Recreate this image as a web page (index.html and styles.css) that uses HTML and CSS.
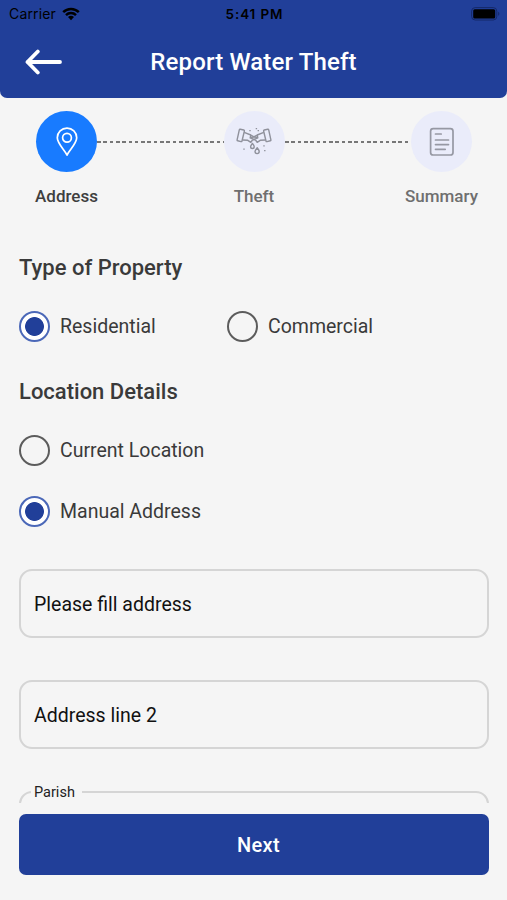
FILE: index.html
```
<!DOCTYPE html>
<html lang="en">
<head>
<meta charset="UTF-8">
<meta name="viewport" content="width=device-width, initial-scale=1">
<title>Report Water Theft</title>
<link rel="stylesheet" href="styles.css">
</head>

<body>
<header class="header">
	<div class="status-bar">
		<div class="carrier">
			<span>Carrier</span>
			<svg class="wifi" width="18" height="14" viewBox="0 0 18 14">
				<path d="M1.2 5.2a11.2 11.2 0 0 1 15.6 0M4 8.1a7.2 7.2 0 0 1 10 0" fill="none" stroke="#000" stroke-width="2.5"/>
				<path d="M9 13.2L6 10.1a4.3 4.3 0 0 1 6 0z"/>
			</svg>
		</div>
		<div class="time">5:41 PM</div>
		<svg class="battery" width="29" height="14" viewBox="0 0 29 14">
			<rect x=".6" y=".6" width="25.2" height="12.4" rx="3.6" fill="none" stroke="#142869"/>
			<rect x="2.2" y="2.2" width="22" height="9.2" rx="1.5"/>
			<path d="M27.2 4.8c1.600.7 1.600 3.300 0 4z" fill="#142869"/>
		</svg>
	</div>
	<div class="nav-bar">
		<svg class="back" width="38" height="26" viewBox="0 0 38 26">
			<path d="M35 13H2.500M12.800 2.500L2.500 13l10.300 10.500" fill="none" stroke="#fff" stroke-width="3.800" stroke-linecap="round" stroke-linejoin="round"/>
		</svg>
		<h1>Report Water Theft</h1>
	</div>
</header>

<main class="content">
	<ol class="steps">
		<li class="step active">
			<span class="step-icon">
				<svg width="22" height="30" viewBox="0 0 22 30" fill="none" stroke="#fff" stroke-width="1.700" stroke-linejoin="round">
					<path d="M11 28C8.500 23 1.300 16.500 1.300 10.800a9.700 9.700 0 0 1 19.400 0C20.700 16.500 13.500 23 11 28z"/>
					<circle cx="11" cy="10.700" r="4.400"/>
				</svg>
			</span>
			<span class="step-label">Address</span>
		</li>
		<li class="step-line"></li>
		<li class="step">
			<span class="step-icon">
				<svg width="36" height="30" viewBox="0 0 36 30" fill="none" stroke="#8f919b" stroke-width="1.400" stroke-linejoin="round">
					<path d="M4.200 2.200l3.600.8q.8.200.6 1L6 14q-.2.800-1 .6l-3.300-.8q-.8-.2-.6-1L3.300 2.900q.2-.8.900-.7z"/>
					<path d="M31.800 2.200l-3.600.8q-.8.200-.6 1L30 14q.2.800 1 .6l3.300-.8q.8-.2.600-1L32.700 2.900q-.2-.8-.9-.7z"/>
					<path d="M8.200 5.400l6.600 2.600 3.200 1.800 3.200-1.800 6.600-2.600"/>
					<path d="M6.600 13l5.200.3 3 2 1.300-1.800 1.900-1 1.900 1 1.300 1.800 3-2 5.200-.3"/>
					<path d="M14.800 8l-.6 2.800 3.800-1 3.800 1-.6-2.800M14.200 10.800l3.800 1.700 3.800-1.700"/>
					<path d="M16.400 16.400c1.100 1.500 1.800 2.300 1.800 3.300a1.800 1.800 0 0 1-3.600 0c0-1 .8-1.800 1.800-3.300z"/>
					<path d="M21.200 20.800c1.300 1.600 2 2.600 2 3.700a2.100 2.100 0 0 1-4.200 0c0-1.100.9-2.100 2.200-3.700z"/>
					<path d="M14 3v1.300M20.400 1v1.300M22.300 3v1.200M8 21.500v1.300M28 18.300v1.300M28.800 23v1.300"/>
				</svg>
			</span>
			<span class="step-label">Theft</span>
		</li>
		<li class="step-line"></li>
		<li class="step">
			<span class="step-icon">
				<svg width="26" height="30" viewBox="0 0 26 30" fill="none" stroke="#9698a3" stroke-width="1.700" stroke-linecap="round">
					<rect x="1.600" y="1.600" width="22.400" height="26.400" rx="2.600"/>
					<path d="M6.500 7h5.700M6.500 13h13M6.500 17.600h13M6.500 22.300h9.700"/>
				</svg>
			</span>
			<span class="step-label">Summary</span>
		</li>
	</ol>

	<section class="group">
		<h2>Type of Property</h2>
		<div class="options">
			<label class="option"><input type="radio" name="property" checked>Residential</label>
			<label class="option"><input type="radio" name="property">Commercial</label>
		</div>
	</section>

	<section class="group">
		<h2>Location Details</h2>
		<div class="options stacked">
			<label class="option"><input type="radio" name="location">Current Location</label>
			<label class="option"><input type="radio" name="location" checked>Manual Address</label>
		</div>
	</section>

	<div class="fields">
		<input class="field" type="text" placeholder="Please fill address">
		<input class="field" type="text" placeholder="Address line 2">
		<fieldset class="field-outline">
			<legend>Parish</legend>
		</fieldset>
	</div>
</main>

<footer class="footer">
	<button class="next" type="button">Next</button>
</footer>
</body>
</html>
```
FILE: styles.css
```
* {
	box-sizing: border-box;
}

body {
	margin: 0;
	height: 900px;
	display: flex;
	flex-direction: column;
	overflow: hidden;
	background: #f5f5f5;
	color: #3a3a3a;
	font-family: Roboto, sans-serif;
}

h1, h2 {
	margin: 0;
	font-weight: 500;
}

.header {
	flex: none;
	height: 98px;
	background: #213f99;
	border-radius: 0 0 7px 7px;
}

.status-bar {
	display: grid;
	grid-template-columns: 1fr auto 1fr;
	align-items: center;
	height: 27px;
	padding: 0 7px 0 9px;
	color: #000;
	font: 14px Inter, sans-serif;
}

.carrier {
	display: flex;
	align-items: center;
	gap: 6px;
	letter-spacing: .15px;
}

.time {
	font-weight: 600;
	font-size: 13.500px;
	letter-spacing: .9px;
}

.battery {
	justify-self: end;
}

.nav-bar {
	display: grid;
	grid-template-columns: 38px 1fr 38px;
	align-items: center;
	height: 70px;
	padding: 0 25px;
}

h1 {
	color: #fff;
	font-size: 24px;
	letter-spacing: .15px;
	text-align: center;
}

.content {
	flex: none;
	height: 705px;
	overflow: hidden;
	padding: 13px 18px 0 19px;
}

/* Progress steps */

.steps {
	display: flex;
	margin: 0;
	padding: 0 17px;
	list-style: none;
}

.step {
	display: flex;
	flex-direction: column;
	align-items: center;
	width: 61px;
	color: #6f6f6f;
}

.step-icon {
	display: flex;
	align-items: center;
	justify-content: center;
	width: 61px;
	height: 61px;
	border-radius: 50%;
	background: #eaecfa;
}

.step-label {
	margin-top: 14px;
	font-size: 17px;
	font-weight: 500;
	line-height: 20px;
}

.active {
	color: #3f3f3f;
}

.active .step-icon {
	background: #187bff;
}

.step-line {
	flex: 1;
	height: 2px;
	margin-top: 30px;
	background: repeating-linear-gradient(to right, #777 0 3.600px, transparent 3.600px 6.300px);
}

/* Radio groups */

.group {
	margin-top: 48px;
}

.group + .group {
	margin-top: 36px;
}

h2 {
	font-size: 22px;
	line-height: 28px;
}

.options {
	display: grid;
	grid-template-columns: 208px 1fr;
	margin-top: 29px;
}

.stacked {
	grid-template-columns: 1fr;
	row-gap: 30px;
}

.option {
	display: flex;
	align-items: center;
	gap: 10px;
	font-size: 19.500px;
	line-height: 31px;
}

.option input {
	appearance: none;
	width: 31px;
	height: 31px;
	margin: 0;
	border: 2px solid #5c5c5c;
	border-radius: 50%;
}

.option input:checked {
	border-color: #4b68b8;
	background: radial-gradient(circle, #213f99 9px, #fff 9.800px);
}

/* Text fields */

.fields {
	display: flex;
	flex-direction: column;
	gap: 43px;
	margin-top: 42px;
}

.field {
	height: 69px;
	margin-bottom: -1px;
	padding: 1px 13px 0;
	border: 2px solid #d5d5d5;
	border-radius: 13px;
	background: none;
	font: 19.500px Roboto, sans-serif;
}

.field::placeholder {
	color: #111;
	opacity: 1;
}

.field-outline {
	height: 76px;
	margin: -8px 0 0;
	padding: 0 10px;
	border: 2px solid #d5d5d5;
	border-radius: 13px;
}

legend {
	padding: 1px 7px 0 3px;
	color: #222;
	font-size: 14.500px;
	line-height: 17px;
}

.footer {
	padding: 11px 18px 24px 19px;
}

.next {
	display: block;
	width: 100%;
	height: 61px;
	padding: 0 0 0 9px;
	border: 0;
	border-radius: 7px;
	background: #213f99;
	color: #fff;
	font: 500 20px Roboto, sans-serif;
	letter-spacing: .3px;
}
```
